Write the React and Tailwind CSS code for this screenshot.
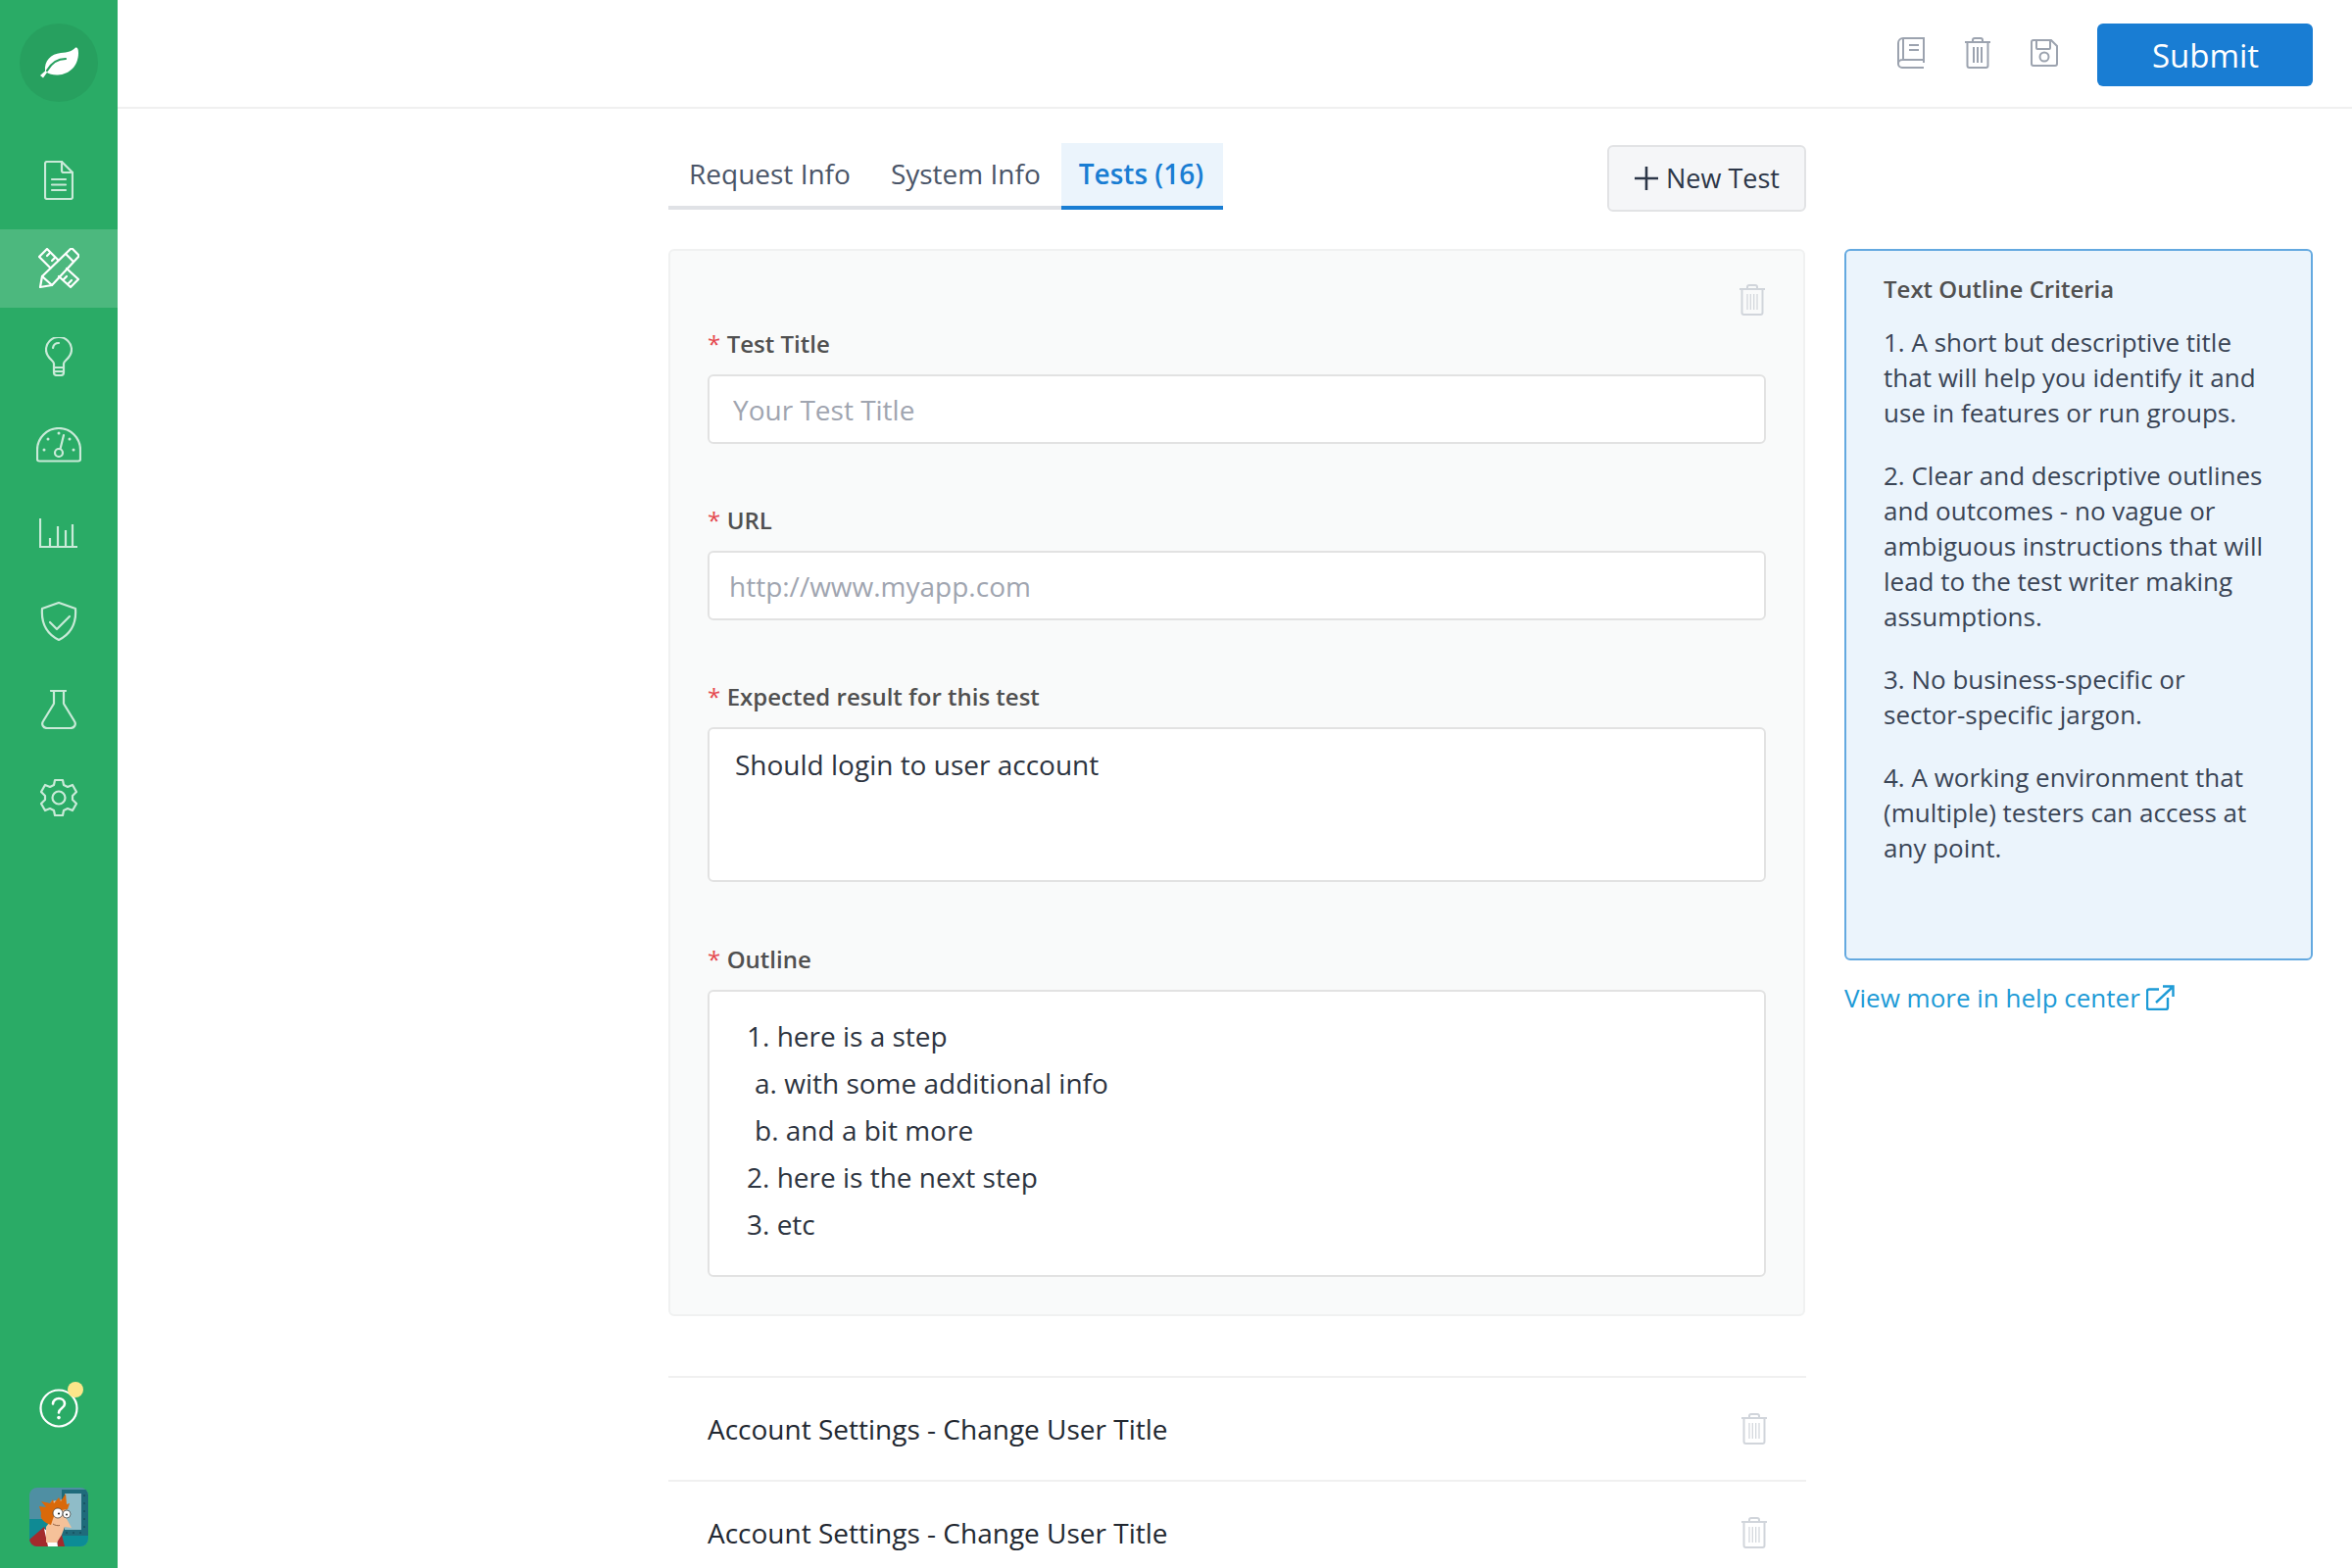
const NavIcon = ({ children, w = 40, h = 40, active }) => (
  <svg
    width={w}
    height={h}
    viewBox={`0 0 ${w} ${h}`}
    fill="none"
    stroke={active ? '#ffffff' : '#c9ead8'}
    strokeWidth="2.2"
    strokeLinecap="round"
    strokeLinejoin="round"
  >
    {children}
  </svg>
);

const navItems = [
  {
    w: 30,
    h: 40,
    icon: (
      <>
        <path d="M3 1h15l11 11v25a2 2 0 0 1-2 2H3a2 2 0 0 1-2-2V3a2 2 0 0 1 2-2z" />
        <path d="M18 1v9a2 2 0 0 0 2 2h9" />
        <path d="M8 19h14M8 24.500h14M8 30h14" />
      </>
    ),
  },
  {
    w: 42,
    h: 42,
    active: true,
    icon: (
      <>
        <path d="M12.500 20.500L1 9l8-8 11.500 11.500" />
        <path d="M21 29l12 11 8-8-12-11" />
        <path d="M12 5l-3 3M17 10l-3 3M29 29l-3 3M34 33l-3 3" />
        <path d="M2 40l2-11L33 1q1-.5 2 0l6 6q.5 1 0 2L14 38z" />
        <path d="M4 29l10 9M28 6l8 8" />
      </>
    ),
  },
  {
    w: 28,
    h: 40,
    icon: (
      <>
        <path d="M9 31v-4c0-3-8-6-8-14a13 13 0 0 1 26 0c0 8-8 11-8 14v4z" />
        <path d="M9 31h10v5a3 3 0 0 1-3 3h-4a3 3 0 0 1-3-3zM9 35h10" />
        <path d="M8 11c.5-3 3-5 6-5" />
      </>
    ),
  },
  {
    w: 46,
    h: 36,
    icon: (
      <>
        <path d="M3 34.500a2 2 0 0 1-2-2V23a22 22 0 0 1 44 0v9.500a2 2 0 0 1-2 2z" />
        <circle cx="23" cy="26" r="4" />
        <path d="M24.500 22l3.500-14" />
        <path d="M12 12v.1M23 6v.1M34 12v.1M8 23v.1M38 23v.1" strokeWidth="3" />
      </>
    ),
  },
  {
    w: 40,
    h: 30,
    icon: (
      <>
        <path d="M1 0v29h38" strokeLinecap="butt" strokeLinejoin="miter" />
        <path d="M11 20v8M19 8v20M27 12v16M34 6v22" strokeLinecap="butt" />
      </>
    ),
  },
  {
    w: 38,
    h: 40,
    icon: (
      <>
        <path d="M19 1l17 6c1 13-3 25-17 32C5 32 1 20 2 7z" />
        <path d="M10 21l7 7 13-13" />
      </>
    ),
  },
  {
    w: 36,
    h: 40,
    icon: (
      <>
        <path d="M10 1h15M13 1v13L2 32c-2 3 0 7 4 7h24c4 0 6-4 4-7L23 14V1" />
      </>
    ),
  },
  {
    w: 38,
    h: 40,
    icon: (
      <>
        <path d="M15 2h8l1 5 4 2 5-2 4 7-4 4v4l4 4-4 7-5-2-4 2-1 5h-8l-1-5-4-2-5 2-4-7 4-4v-4l-4-4 4-7 5 2 4-2z" />
        <circle cx="19" cy="20" r="6.500" />
      </>
    ),
  },
];

const TrashIcon = ({ color = '#9ca3af', bars = 3 }) => (
  <svg width="28" height="32" viewBox="0 0 28 32" fill="none" stroke={color} strokeWidth="2">
    <path d="M1 5h26M9 5V3a2 2 0 0 1 2-2h6a2 2 0 0 1 2 2v2" />
    <path d="M3.500 5v24a2 2 0 0 0 2 2h17a2 2 0 0 0 2-2V5" />
    {bars === 3 ? <path d="M10 10v16M14 10v16M18 10v16" /> : <path d="M9 10v16M12.300 10v16M15.700 10v16M19 10v16" strokeWidth="1.200" />}
  </svg>
);

const Label = ({ children }) => (
  <div className="text-[24px] leading-[32px] font-semibold text-[#505050] flex gap-[6.5px] h-[32px] mb-[15px]">
    <span className="text-[#e5484d] font-normal">*</span>
    {children}
  </div>
);

const ListRow = () => (
  <div className="h-[106px] border-t-2 border-[#f0f0f0] flex items-center justify-between pl-[40px] pr-[39px]">
    <span className="text-[28px] text-[#222831]">Account Settings - Change User Title</span>
    <TrashIcon color="#d1d5db" bars={4} />
  </div>
);

const App = () => {
  return (
    <div className="flex w-[2400px] h-[1600px] overflow-hidden bg-white font-['Open_Sans',sans-serif]">
      <aside className="w-[120px] shrink-0 bg-[#2aab66] flex flex-col items-center pt-[24px]">
        <div className="w-[80px] h-[80px] rounded-full bg-[#27a05f] flex items-center justify-center mb-[40px]">
          <svg width="40" height="32" viewBox="0 0 40 32" fill="#ffffff">
            <path d="M1 29l5-4.500C5 14 12 7 22 6c7-.5 12-2 15-5.500 2.500-.5 3 2.500 3 5.500 0 13-9 22-21 22.500-5 .2-9-1-11-2.500L4 31.500z" />
            <path d="M8 24c4-7 11-12 19-12" fill="none" stroke="#27a05f" strokeWidth="2.200" strokeLinecap="round" />
          </svg>
        </div>
        <nav className="w-full flex flex-col gap-[10px]">
          {navItems.map((item, i) => (
            <div key={i} className={`h-[80px] flex items-center justify-center ${item.active ? 'bg-[#4cb87e]' : ''}`}>
              <NavIcon w={item.w} h={item.h} active={item.active}>{item.icon}</NavIcon>
            </div>
          ))}
        </nav>
        <div className="mt-auto relative w-[40px] h-[40px] mb-[61px]">
          <svg width="40" height="40" viewBox="0 0 40 40" fill="none" stroke="#ffffff" strokeWidth="2.200" strokeLinecap="round">
            <circle cx="20" cy="20" r="18.500" />
            <path d="M14 15.500c0-3.500 3-5.500 6-5.500s6 2 6 5.500c0 4.500-6 4.500-6 9" strokeWidth="2.600" />
            <path d="M20 29.500v.1" strokeWidth="3.600" />
          </svg>
          <span className="absolute right-[-5px] top-[-7px] w-[16px] h-[16px] rounded-full bg-[#fde68a]" />
        </div>
        <div className="w-[60px] h-[60px] rounded-[8px] overflow-hidden mb-[22px] shrink-0">
          <svg width="60" height="60" viewBox="0 0 60 60">
            <rect width="60" height="60" fill="#4f8fa3" />
            <rect x="0" y="32" width="20" height="28" fill="#0f8a94" />
            <rect x="20" y="44" width="40" height="16" fill="#0c8c96" />
            <rect x="33" y="2" width="27" height="47" fill="#1f6b7b" />
            <rect x="36" y="6" width="17" height="37" fill="#8fbcc8" />
            <path d="M56 8v.1M56 16v.1M56 24v.1M56 32v.1M56 40v.1M38 46v.1M45 46v.1M52 46v.1" stroke="#123f4c" strokeWidth="1.600" strokeLinecap="round" />
            <path d="M0 60v-7l15-13 4 8 6 12z" fill="#a32a2c" />
            <path d="M15 42l13 8 1 10H19z" fill="#ffffff" />
            <path d="M28 50l5-2 3 12h-7z" fill="#a32a2c" />
            <path d="M22 14l14-2 1 18 6 11-7-1-3 8-5 8H17V40l3-4z" fill="#f5c199" />
            <path d="M22 38c-6-2-12-6-10-12l-2-7 7 1-5-6 9 2 3-4 1 4 5-6 2 4 5-8 1 11 3-1-2 6-12 2-3 8z" fill="#d9690a" />
            <circle cx="29" cy="26" r="5" fill="#ffffff" stroke="#333333" strokeWidth=".7" />
            <circle cx="38" cy="27" r="4" fill="#ffffff" stroke="#333333" strokeWidth=".7" />
            <circle cx="30" cy="26.500" r="1.100" fill="#222222" />
            <circle cx="38" cy="27.500" r="1" fill="#222222" />
            <path d="M24 37c2 1.500 5 2 7 1.500" stroke="#7a4a30" strokeWidth=".8" fill="none" />
          </svg>
        </div>
      </aside>

      <div className="flex-1 min-w-0">
        <header className="h-[111px] border-b-2 border-[#f0f0f0] flex items-center justify-end pr-[40px] pt-[3px]">
          <div className="flex items-center gap-[40px] mr-[40px] mb-[4px]">
            <svg width="28" height="32" viewBox="0 0 28 32" fill="none" stroke="#9ca3af" strokeWidth="2">
              <path d="M27 26V1H6a5 5 0 0 0-5 5v21a4 4 0 0 0 4 4h22" />
              <path d="M1 27a4 4 0 0 1 4-4h22M6 1v22M12 8h10M12 13h10" />
            </svg>
            <TrashIcon />
            <svg width="28" height="28" viewBox="0 0 28 28" fill="none" stroke="#9ca3af" strokeWidth="2">
              <path d="M3 1h18l6 6v18a2 2 0 0 1-2 2H3a2 2 0 0 1-2-2V3a2 2 0 0 1 2-2z" />
              <path d="M6 1v8a1 1 0 0 0 1 1h12a1 1 0 0 0 1-1V1" />
              <circle cx="14" cy="18" r="4.500" />
            </svg>
          </div>
          <button className="w-[220px] h-[64px] rounded-[6px] bg-[#197dd3] text-white text-[33px] font-medium leading-none pl-[1px]">Submit</button>
        </header>

        <div className="grid grid-cols-[1161px_478px] gap-x-[39px] pl-[562px] pt-[35px]">
          <div className="flex items-start justify-between h-[108px]">
            <div className="flex h-[68px] text-[28px] text-[#4a5568]">
              <div className="pl-[21px] pr-[20px] border-b-4 border-[#e0e2e6] flex items-center pb-[2px]">Request Info</div>
              <div className="pl-[21px] pr-[21px] border-b-4 border-[#e0e2e6] flex items-center pb-[2px]">System Info</div>
              <div className="pl-[18px] pr-[20px] border-b-4 border-[#197dd3] bg-[#ebf4fc] text-[#197dd3] font-semibold flex items-center pb-[2px]">Tests (16)</div>
            </div>
            <button className="mt-[2px] w-[203px] h-[68px] rounded-[6px] bg-[#f5f6f8] border-2 border-[#e2e3e5] text-[#2d3748] text-[27px] font-medium flex items-center justify-center gap-[7px]">
              <svg width="26" height="26" viewBox="0 0 26 26" fill="none" stroke="#2d3748" strokeWidth="2.600">
                <path d="M13 1v24M1 13h24" />
              </svg>
              New Test
            </button>
          </div>
          <div />

          <div>
            <section className="relative w-[1160px] h-[1089px] bg-[#f9fafa] border-2 border-[#f0f1f1] rounded-[6px] pl-[38px] pr-[38px] pt-[79px]">
              <div className="absolute right-[38px] top-[34px]">
                <TrashIcon color="#d1d5db" bars={4} />
              </div>
              <Label>Test Title</Label>
              <input
                readOnly
                placeholder="Your Test Title"
                className="block w-full h-[71px] bg-white border-2 border-[#e2e2e2] rounded-[6px] px-[24px] text-[28px] outline-none placeholder:text-[#a0a5b0] mb-[62px]"
              />
              <Label>URL</Label>
              <input
                readOnly
                placeholder="http://www.myapp.com"
                className="block w-full h-[71px] bg-white border-2 border-[#e2e2e2] rounded-[6px] px-[20px] text-[28px] outline-none placeholder:text-[#a0a5b0] mb-[62px]"
              />
              <Label>Expected result for this test</Label>
              <div className="w-full h-[158px] bg-white border-2 border-[#e2e2e2] rounded-[6px] px-[26px] pt-[18px] text-[28px] leading-[36px] text-[#2d3440] mb-[63px]">
                Should login to user account
              </div>
              <Label>Outline</Label>
              <div className="w-full h-[293px] bg-white border-2 border-[#e2e2e2] rounded-[6px] pl-[38px] pt-[21px] text-[28px] leading-[48px] text-[#2d3440]">
                <div>1. here is a step</div>
                <div className="pl-[8px]">a. with some additional info</div>
                <div className="pl-[8px]">b. and a bit more</div>
                <div>2. here is the next step</div>
                <div>3. etc</div>
              </div>
            </section>
            <div className="mt-[61px]">
              <ListRow />
              <ListRow />
            </div>
          </div>

          <aside>
            <div className="h-[726px] bg-[#ebf4fc] border-2 border-[#64a9e0] rounded-[6px] pl-[38px] pr-[44px] pt-[21px]">
              <h3 className="text-[24px] leading-[36px] font-semibold text-[#505050] mb-[18px]">Text Outline Criteria</h3>
              <div className="text-[26px] leading-[36px] text-[#3a4556] flex flex-col gap-[28px]">
                <p>1. A short but descriptive title that will help you identify it and use in features or run groups.</p>
                <p>2. Clear and descriptive outlines and outcomes - no vague or ambiguous instructions that will lead to the test writer making assumptions.</p>
                <p>3. No business-specific or sector-specific jargon.</p>
                <p>4. A working environment that (multiple) testers can access at any point.</p>
              </div>
            </div>
            <a className="mt-[20px] flex items-center gap-[6px] text-[26px] leading-[36px] text-[#1c9ad6]">
              View more in help center
              <svg width="29" height="26" viewBox="0 0 29 26" fill="none" stroke="#1c9ad6" strokeWidth="2.400">
                <path d="M13 4.500H3a2 2 0 0 0-2 2v16.500a2 2 0 0 0 2 2h17a2 2 0 0 0 2-2V13" />
                <path d="M10 18L26 3M17 1.500h10.500V12" />
              </svg>
            </a>
          </aside>
        </div>
      </div>
    </div>
  );
};

export default App;
